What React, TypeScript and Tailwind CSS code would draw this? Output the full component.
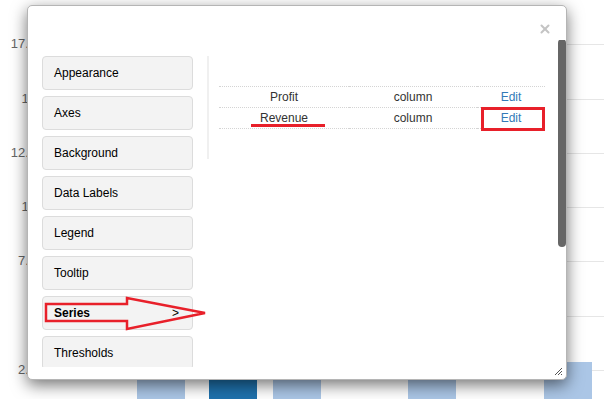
import { X } from "lucide-react";

const navItems = [
  "Appearance",
  "Axes",
  "Background",
  "Data Labels",
  "Legend",
  "Tooltip",
  "Series",
  "Thresholds",
];

const series = [
  { name: "Profit", type: "column" },
  { name: "Revenue", type: "column" },
];

// y-axis ticks of the chart behind the dialog
const ticks = [
  { label: "17.5", y: 44 },
  { label: "15", y: 99 },
  { label: "12.5", y: 153 },
  { label: "10", y: 207 },
  { label: "7.5", y: 261 },
  { label: "5", y: 316 },
  { label: "2.5", y: 370 },
];

const bars = [
  { x: 137, dark: false },
  { x: 209, dark: true },
  { x: 273, dark: false },
  { x: 408, dark: false },
  { x: 544, dark: false },
];

function ChartBackdrop() {
  return (
    <div className="absolute inset-0 overflow-hidden bg-white">
      {ticks.map((t) => (
        <div key={t.label}>
          <div
            className="absolute left-[40px] right-[10px] h-px bg-[#e6e6e6]"
            style={{ top: t.y }}
          />
          <span
            className="absolute left-0 w-[36px] text-right text-[13px] leading-none text-[#666]"
            style={{ top: t.y - 7 }}
          >
            {t.label}
          </span>
        </div>
      ))}
      {bars.map((b) => (
        <div
          key={b.x}
          className={
            b.dark
              ? "absolute top-[362px] h-[40px] w-[48px] bg-[#1f72ad]"
              : "absolute top-[362px] h-[40px] w-[48px] bg-[#abc6e6]"
          }
          style={{ left: b.x }}
        />
      ))}
    </div>
  );
}

function SeriesTable() {
  return (
    <table className="w-[326px] border-collapse text-[12px] text-[#333]">
      <tbody>
        {series.map((s) => (
          <tr key={s.name} className="h-[21px] border-y border-dotted border-[#d4d4d4]">
            <td className="w-[130px] text-center">{s.name}</td>
            <td className="w-[128px] text-center">{s.type}</td>
            <td className="text-center">
              <a className="text-[#337ab7]">Edit</a>
            </td>
          </tr>
        ))}
      </tbody>
    </table>
  );
}

// red markup drawn over the screenshot, in page coordinates
function Annotations() {
  return (
    <>
      <svg
        className="pointer-events-none absolute left-0 top-0"
        width="614"
        height="399"
        viewBox="0 0 614 399"
      >
        <polygon
          points="46,304 127,304 127,298 205,313 127,329 127,321 46,321"
          fill="none"
          stroke="#e8202a"
          strokeWidth="2.5"
        />
      </svg>
      <div className="absolute left-[251px] top-[124px] h-[3px] w-[74px] bg-[#e8202a]" />
      <div className="absolute left-[481px] top-[107px] h-[24px] w-[64px] border-[3px] border-[#e8202a]" />
    </>
  );
}

export default function App() {
  return (
    <div className="relative h-[399px] w-[614px] overflow-hidden font-['Liberation_Sans',Arial,sans-serif]">
      <ChartBackdrop />

      <div className="absolute left-[27px] top-[5px] flex h-[375px] w-[540px] flex-col rounded-[5px] border border-[#b5b5b5] bg-white shadow-[0_5px_16px_rgba(0,0,0,0.55)]">
        <div className="flex h-[34px] shrink-0 items-start justify-end pr-[14px] pt-[16px]">
          <X className="h-[14px] w-[14px] text-[#c4c4c4]" strokeWidth={3.5} />
        </div>

        <div className="relative mb-[12px] flex flex-1 overflow-hidden pl-[14px] pt-[16px]">
          <div className="flex w-[151px] shrink-0 flex-col gap-[6px]">
            {navItems.map((item) => (
              <div
                key={item}
                className={
                  item === "Series"
                    ? "flex h-[34px] shrink-0 items-center justify-between rounded-[4px] border border-[#dcdcdc] bg-[#f3f3f3] pl-[11px] pr-[13px] text-[12px] font-bold text-black"
                    : "flex h-[34px] shrink-0 items-center rounded-[4px] border border-[#dcdcdc] bg-[#f3f3f3] px-[11px] text-[12px] text-black"
                }
              >
                <span>{item}</span>
                {item === "Series" && <span className="font-normal">&gt;</span>}
              </div>
            ))}
          </div>

          <div className="ml-[14px] h-[103px] w-[2px] shrink-0 bg-[#f0f0f0]" />

          <div className="pl-[10px] pt-[30px]">
            <SeriesTable />
          </div>

          {/* scrollbar */}
          <div className="absolute right-0 top-[-1px] h-[208px] w-[8px] rounded-full bg-[#666]" />
        </div>

        {/* resize grip */}
        <svg className="absolute bottom-[3px] right-[3px]" width="9" height="9" viewBox="0 0 9 9">
          <path d="M8 1 L1 8 M8 4 L4 8 M8 7 L7 8" stroke="#555" strokeWidth="1" />
        </svg>
      </div>

      <Annotations />
    </div>
  );
}
